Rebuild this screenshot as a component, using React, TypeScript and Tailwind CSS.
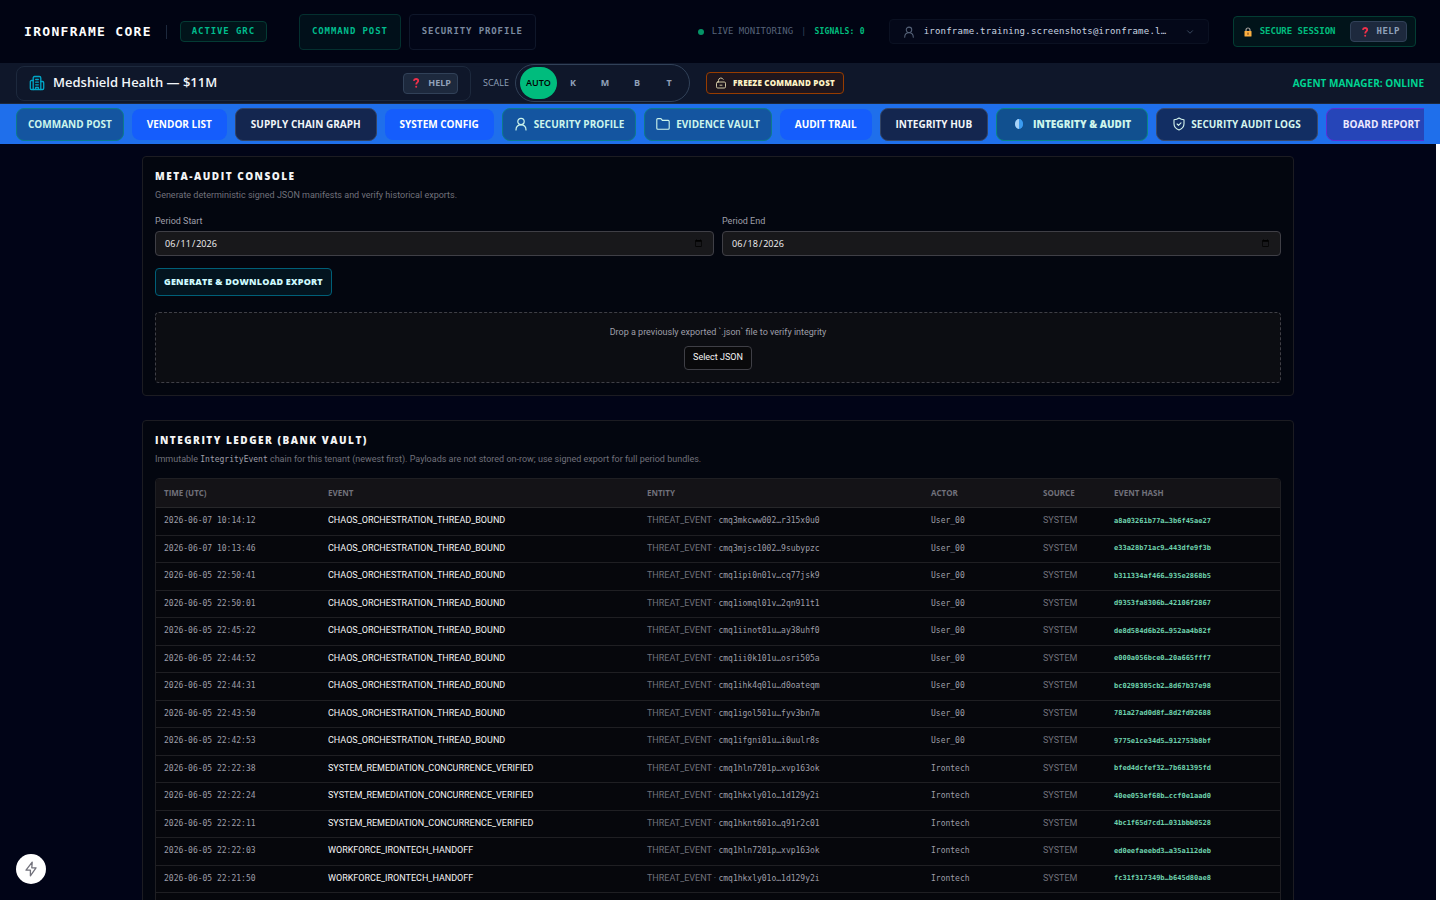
import { ChevronDown } from 'lucide-react'
import type { ReactNode } from 'react'
import clsx from 'clsx'

type LedgerRow = {
  time: string
  event: string
  entity: string
  actor: string
  hash: string
}

const CHAOS = 'CHAOS_ORCHESTRATION_THREAD_BOUND'
const REMEDIATION = 'SYSTEM_REMEDIATION_CONCURRENCE_VERIFIED'
const HANDOFF = 'WORKFORCE_IRONTECH_HANDOFF'

const rows: LedgerRow[] = [
  { time: '2026-06-07 10:14:12', event: CHAOS, entity: 'cmq3mkcww002…r315x0u0', actor: 'User_00', hash: 'a8a03261b77a…3b6f45ae27' },
  { time: '2026-06-07 10:13:46', event: CHAOS, entity: 'cmq3mjsc1002…9subypzc', actor: 'User_00', hash: 'e33a28b71ac9…443dfe9f3b' },
  { time: '2026-06-05 22:50:41', event: CHAOS, entity: 'cmq1ipi0n01v…cq77jsk9', actor: 'User_00', hash: 'b311334af466…935e2868b5' },
  { time: '2026-06-05 22:50:01', event: CHAOS, entity: 'cmq1iomql01v…2qn911t1', actor: 'User_00', hash: 'd9353fa8306b…42106f2867' },
  { time: '2026-06-05 22:45:22', event: CHAOS, entity: 'cmq1iinot01u…ay38uhf0', actor: 'User_00', hash: 'de8d584d6b26…952aa4b82f' },
  { time: '2026-06-05 22:44:52', event: CHAOS, entity: 'cmq1ii0k101u…osri505a', actor: 'User_00', hash: 'e000a056bce0…20a665fff7' },
  { time: '2026-06-05 22:44:31', event: CHAOS, entity: 'cmq1ihk4q01u…d0oateqm', actor: 'User_00', hash: 'bc0298305cb2…8d67b37e98' },
  { time: '2026-06-05 22:43:50', event: CHAOS, entity: 'cmq1igol501u…fyv3bn7m', actor: 'User_00', hash: '781a27ad0d8f…8d2fd92688' },
  { time: '2026-06-05 22:42:53', event: CHAOS, entity: 'cmq1ifgni01u…i0uulr8s', actor: 'User_00', hash: '9775e1ce34d5…912753b8bf' },
  { time: '2026-06-05 22:22:38', event: REMEDIATION, entity: 'cmq1hln7201p…xvp163ok', actor: 'Irontech', hash: 'bfed4dcfef32…7b681395fd' },
  { time: '2026-06-05 22:22:24', event: REMEDIATION, entity: 'cmq1hkxly01o…1d129y2i', actor: 'Irontech', hash: '40ee053ef68b…ccf0e1aad0' },
  { time: '2026-06-05 22:22:11', event: REMEDIATION, entity: 'cmq1hknt601o…q91r2c01', actor: 'Irontech', hash: '4bc1f65d7cd1…031bbb0528' },
  { time: '2026-06-05 22:22:03', event: HANDOFF, entity: 'cmq1hln7201p…xvp163ok', actor: 'Irontech', hash: 'ed0eefaeebd3…a35a112deb' },
  { time: '2026-06-05 22:21:50', event: HANDOFF, entity: 'cmq1hkxly01o…1d129y2i', actor: 'Irontech', hash: 'fc31f317349b…b645d80ae8' },
]

const tabStyles = {
  teal: 'px-[11px] border border-[#0d7a8c] bg-[#1455a0] text-[#cdf5ec]',
  blue: 'px-[15px] bg-[#155dfc] text-white',
  navy: 'px-[15px] border border-[#334465] bg-[#14264f] text-slate-100',
  active: 'px-4 border border-[#0b8585] bg-[#11508f] text-[#cdf5ec] font-extrabold',
  logs: 'px-4 border border-[#3b4a6b] bg-[#122e63] text-[#d5f5ee]',
  violet: 'px-4 border border-[#5b2fd8] bg-[#2645b8] text-violet-100',
}

const tabs: { label: string; kind: keyof typeof tabStyles; icon?: ReactNode }[] = [
  { label: 'COMMAND POST', kind: 'teal' },
  { label: 'VENDOR LIST', kind: 'blue' },
  { label: 'SUPPLY CHAIN GRAPH', kind: 'navy' },
  { label: 'SYSTEM CONFIG', kind: 'blue' },
  { label: 'SECURITY PROFILE', kind: 'teal', icon: <PersonIcon className="size-[14px]" /> },
  { label: 'EVIDENCE VAULT', kind: 'teal', icon: <FolderIcon /> },
  { label: 'AUDIT TRAIL', kind: 'blue' },
  { label: 'INTEGRITY HUB', kind: 'navy' },
  { label: 'INTEGRITY & AUDIT', kind: 'active', icon: <HalfMoonIcon /> },
  { label: 'SECURITY AUDIT LOGS', kind: 'logs', icon: <ShieldIcon /> },
  { label: 'BOARD REPORT', kind: 'violet' },
]

function PersonIcon({ className }: { className?: string }) {
  return (
    <svg viewBox="0 0 14 14" fill="none" stroke="currentColor" strokeWidth="1.2" strokeLinecap="round" className={clsx('shrink-0', className)}>
      <circle cx="7" cy="4.5" r="3.2" />
      <path d="M2 13c0-3.2 2-5.2 5-5.2s5 2 5 5.2" />
    </svg>
  )
}

function FolderIcon() {
  return (
    <svg viewBox="0 0 14 14" fill="none" stroke="currentColor" strokeWidth="1.1" strokeLinejoin="round" className="size-[14px] shrink-0">
      <path d="M.8 11.2V2.6c0-.6.4-1 1-1h2.7c.4 0 .7.2.9.5l.9 1.3h5.9c.6 0 1 .4 1 1v6.8c0 .6-.4 1-1 1H1.8c-.6 0-1-.4-1-1z" />
    </svg>
  )
}

function ShieldIcon() {
  return (
    <svg viewBox="0 0 12 14" fill="none" stroke="currentColor" strokeWidth="1.1" strokeLinejoin="round" strokeLinecap="round" className="h-[14px] w-3 shrink-0">
      <path d="M6 1c1.4 1.1 3 1.7 5 1.7v4c0 3-2 5.1-5 6.3-3-1.200-5-3.300-5-6.300v-4C3 2.700 4.600 2.100 6 1z" />
      <path d="M4.1 7l1.4 1.4L8 5.9" />
    </svg>
  )
}

function HalfMoonIcon() {
  return (
    <svg viewBox="0 0 14 12" className="h-3 w-[14px] shrink-0">
      <ellipse cx="6" cy="6" rx="4" ry="5" fill="#1c77d4" />
      <path d="M6 1a4 5 0 0 0 0 10z" fill="#a9d3f7" />
      <path d="M6 1a4 5 0 0 1 0 10z" fill="#3b9bf0" />
    </svg>
  )
}

function HospitalIcon() {
  return (
    <svg viewBox="0 0 16 16" fill="none" stroke="currentColor" strokeWidth="1.3" strokeLinecap="round" strokeLinejoin="round" className="size-4 shrink-0 text-[#00a6c8]">
      <path d="M4.200 14.500V3c0-.8.6-1.500 1.400-1.500h4.800c.8 0 1.400.7 1.400 1.500v11.500" />
      <path d="M4.200 5.500H2.500c-.7 0-1.200.5-1.200 1.200v6.600c0 .7.5 1.200 1.200 1.200h11c.7 0 1.200-.5 1.200-1.200V7.700c0-.7-.5-1.200-1.200-1.200h-1.700" />
      <path d="M6.700 4.500h2.600M6.700 7.200h2.600M6.700 9.800h2.600M6.700 14.300V12.300h2.600v2" />
    </svg>
  )
}

function UnlockIcon() {
  return (
    <svg viewBox="0 0 12 12" fill="none" stroke="currentColor" strokeWidth="1" strokeLinecap="round" strokeLinejoin="round" className="size-3 shrink-0 opacity-80">
      <rect x="1.5" y="5" width="9" height="6" rx="1.2" />
      <path d="M3.500 5V3.500a2.500 2.500 0 0 1 4.700-1.200M5 8.200h2" />
    </svg>
  )
}

function LockIcon() {
  return (
    <svg viewBox="0 0 8 10" className="h-[10px] w-2 shrink-0">
      <path d="M2 4.500V3a2 2 0 0 1 4 0v1.500" fill="none" stroke="#a8a29e" strokeWidth="1.2" />
      <rect x=".5" y="4" width="7" height="5.5" rx=".6" fill="#fbb040" />
      <rect x="3.4" y="5.6" width="1.2" height="2.2" fill="#7c4a1e" />
    </svg>
  )
}

function QuestionIcon() {
  return (
    <svg viewBox="0 0 8 10" fill="none" className="h-[10px] w-2 shrink-0">
      <path d="M1.800 2.800C2 1.500 2.900 1 4 1c1.300 0 2.200.7 2.200 1.900C6.200 4.400 4.200 4.500 4.200 6.400" stroke="#f0304a" strokeWidth="1.8" />
      <circle cx="4.2" cy="8.7" r="1" fill="#f0304a" />
    </svg>
  )
}

function HelpButton({ className }: { className?: string }) {
  return (
    <button className={clsx('flex h-[21px] items-center gap-2 rounded border border-[#314158] bg-[#1d293d] pr-[6px] font-bold text-[#90a1b9]', className)}>
      <QuestionIcon />
      HELP
    </button>
  )
}

function Panel({ title, children }: { title: string; children: ReactNode }) {
  return (
    <section className="rounded border border-[#1c1c22] bg-[#03060f] p-3">
      <h2 className="text-[10px] leading-[15px] font-extrabold tracking-[0.15em] text-zinc-100">{title}</h2>
      {children}
    </section>
  )
}

function DateField({ id, label, value }: { id: string; label: string; value: string }) {
  return (
    <div className="flex flex-col gap-[3px]">
      <label htmlFor={id} className="font-['Roboto'] text-[9px] leading-[14px] text-zinc-400">
        {label}
      </label>
      <input
        id={id}
        type="date"
        defaultValue={value}
        className="h-[25px] w-full rounded border border-[#3f3f46] bg-[#18181b] px-2 text-[9px] font-medium text-zinc-100"
      />
    </div>
  )
}

export default function App() {
  return (
    <div className="flex h-screen flex-col overflow-hidden bg-[#010417] font-['Open_Sans',sans-serif]">
      {/* Top bar */}
      <header className="flex h-[63px] shrink-0 items-center bg-[#010413] px-6 font-['DejaVu_Sans_Mono',monospace] text-[9px]">
        <h1 className="text-[13px] font-bold tracking-widest text-white">IRONFRAME CORE</h1>
        <span className="ml-[14px] h-[14px] w-px bg-slate-800" />
        <span className="ml-[13px] flex h-[21px] items-center rounded border border-[#043b34] bg-[#01141a] px-[11px] font-bold tracking-widest text-[#00bc8d]">ACTIVE GRC</span>
        <nav className="ml-8 flex gap-2 font-bold tracking-widest">
          <a href="#command" className="flex h-9 items-center rounded border border-[#04302f] bg-[#01101a] px-3 text-[#00bc8d]">COMMAND POST</a>
          <a href="#profile" className="flex h-9 items-center rounded border border-[#0f172a] bg-[#020617] px-3 text-[#7b8aa0]">SECURITY PROFILE</a>
        </nav>
        <div className="ml-auto flex items-center gap-2">
          <span className="size-[6px] rounded-full bg-[#059467]" />
          <span className="text-[#566379]">LIVE MONITORING</span>
          <span className="text-[#314158]">|</span>
          <span className="text-[8px] font-bold tracking-wide text-[#00bc7d]">SIGNALS: 0</span>
        </div>
        <button className="ml-6 flex h-[25px] w-80 items-center rounded border border-[#0b1122] bg-[#040819] px-[13px] text-slate-300">
          <PersonIcon className="size-3 text-[#566379]" />
          <span className="ml-[9px] tracking-wide">ironframe.training.screenshots@ironframe.l…</span>
          <ChevronDown className="ml-auto size-[10px] text-[#45556c]" />
        </button>
        <div className="ml-6 flex h-[31px] items-center rounded border border-[#033d33] bg-[#01141a] pr-2 pl-[10px]">
          <LockIcon />
          <span className="ml-2 font-bold text-[#00bc7d]">SECURE SESSION</span>
          <HelpButton className="ml-[14px] pl-[10px] tracking-wider" />
        </div>
      </header>

      {/* Tenant bar */}
      <div className="flex h-[41px] shrink-0 items-center border-b border-[#1d293d] bg-[#0f172a] px-4">
        <div className="flex h-[35px] w-[455px] items-center rounded-lg border border-[#1d293d] px-3">
          <HospitalIcon />
          <span className="ml-2 text-[13px] font-semibold text-slate-100">Medshield Health — $11M</span>
          <HelpButton className="ml-auto pl-2 text-[9px]" />
        </div>
        <span className="ml-3 text-[9px] text-[#90a1b9]">SCALE</span>
        <div className="ml-[6px] flex h-[38px] items-center rounded-full border border-[#314158] px-1 text-[9px] font-bold text-[#90a1b9]">
          <button className="h-8 w-[37px] rounded-full bg-[#00bc7d] font-semibold text-black">AUTO</button>
          <button className="h-8 w-8">K</button>
          <button className="h-8 w-8">M</button>
          <button className="h-8 w-8">B</button>
          <button className="h-8 w-8">T</button>
        </div>
        <button className="ml-4 flex h-[22px] items-center gap-[6px] rounded border border-[#973c00] bg-[#1f161d] px-2 text-[8px] font-extrabold tracking-wide text-[#fef3c6]">
          <UnlockIcon />
          FREEZE COMMAND POST
        </button>
        <span className="ml-auto text-[10px] font-bold text-[#00d492]">AGENT MANAGER: ONLINE</span>
      </div>

      {/* Section tabs */}
      <nav className="h-10 shrink-0 bg-[#1f6feb] px-4">
        <div className="flex h-full items-center gap-2 overflow-hidden">
          {tabs.map((tab) => (
            <button
              key={tab.label}
              className={clsx(
                'flex shrink-0 items-center gap-[6px] rounded-lg text-[10px] font-bold whitespace-nowrap',
                tab.kind === 'blue' ? 'h-[31px]' : 'h-[33px]',
                tabStyles[tab.kind],
              )}
            >
              {tab.icon}
              {tab.label}
            </button>
          ))}
        </div>
      </nav>

      <main className="min-h-0 flex-1 overflow-y-auto border-r-4 border-white bg-[#010417] pt-3">
        <div className="mx-auto flex max-w-6xl flex-col gap-6">
          <Panel title="META-AUDIT CONSOLE">
            <p className="mt-1 font-['Roboto'] text-[9px] leading-[14px] text-[#71717b]">
              Generate deterministic signed JSON manifests and verify historical exports.
            </p>
            <div className="mt-3 grid grid-cols-2 gap-2">
              <DateField id="start" label="Period Start" value="2026-06-11" />
              <DateField id="end" label="Period End" value="2026-06-18" />
            </div>
            <button className="mt-3 flex h-7 items-center rounded border border-[#005f78] bg-[#03141f] px-2 text-[9px] font-extrabold tracking-wide text-[#cefafe]">
              GENERATE &amp; DOWNLOAD EXPORT
            </button>
            <div className="mt-4 flex h-[71px] flex-col items-center rounded border border-dashed border-[#3f3f46] bg-[#0c0d12] pt-3 font-['Roboto'] text-[9px]">
              <p className="leading-[14px] text-zinc-400">Drop a previously exported `.json` file to verify integrity</p>
              <button className="mt-[7px] h-6 rounded border border-[#3f3f46] bg-[#09090b] px-2 text-zinc-100">Select JSON</button>
            </div>
          </Panel>

          <Panel title="INTEGRITY LEDGER (BANK VAULT)">
            <p className="mt-1 font-['Roboto'] text-[9px] leading-[14px] text-[#71717b]">
              Immutable <code className="font-['DejaVu_Sans_Mono'] text-[8px] leading-none text-zinc-400">IntegrityEvent</code> chain for this tenant (newest first). Payloads are not stored on-row; use signed export for full period bundles.
            </p>
            <div className="mt-3 overflow-hidden rounded border border-[#1f1f23] bg-[#06070c] pb-6">
              <table className="w-full table-fixed text-left font-['Roboto'] text-[9px]">
                <colgroup>
                  <col className="w-[164px]" />
                  <col className="w-[319px]" />
                  <col className="w-[284px]" />
                  <col className="w-[112px]" />
                  <col className="w-[71px]" />
                  <col className="w-[174px]" />
                </colgroup>
                <thead className="bg-[#141317] font-['Open_Sans'] text-[8px] text-[#71717b]">
                  <tr className="h-7 border-b border-[#27272a]">
                    <th className="px-2 font-bold">TIME (UTC)</th>
                    <th className="px-2 font-bold">EVENT</th>
                    <th className="px-2 font-bold">ENTITY</th>
                    <th className="px-2 font-bold">ACTOR</th>
                    <th className="px-2 font-bold">SOURCE</th>
                    <th className="px-2 font-bold">EVENT HASH</th>
                  </tr>
                </thead>
                <tbody>
                  {rows.map((row) => (
                    <tr key={row.time} className="h-[27px] border-b border-[#1f1f23] odd:h-7">
                      <td className="px-2 font-['DejaVu_Sans_Mono'] text-[8px] text-[#9f9fa9]">{row.time}</td>
                      <td className="px-2 text-zinc-100">{row.event}</td>
                      <td className="px-2 text-[#71717b]">
                        THREAT_EVENT · <span className="font-['DejaVu_Sans_Mono'] text-[8px] text-[#9f9fa9]">{row.entity}</span>
                      </td>
                      <td className="px-2 font-['DejaVu_Sans_Mono'] text-[8px] text-[#9f9fa9]">{row.actor}</td>
                      <td className="px-2 text-[#71717b]">SYSTEM</td>
                      <td className="px-2 font-['DejaVu_Sans_Mono'] text-[7px] font-bold text-[#6fd3ae]">{row.hash}</td>
                    </tr>
                  ))}
                </tbody>
              </table>
            </div>
          </Panel>
        </div>
      </main>

      {/* Quick actions */}
      <button aria-label="Quick actions" className="fixed bottom-4 left-4 flex size-[30px] items-center justify-center rounded-full bg-white shadow-2xl">
        <svg viewBox="0 0 16 16" fill="none" stroke="#71717b" strokeWidth="1.3" strokeLinejoin="round" className="size-4">
          <path d="M9.200 1.200L3 9.200h4.400v5.600L13 6.800H8.800z" />
        </svg>
      </button>
    </div>
  )
}
